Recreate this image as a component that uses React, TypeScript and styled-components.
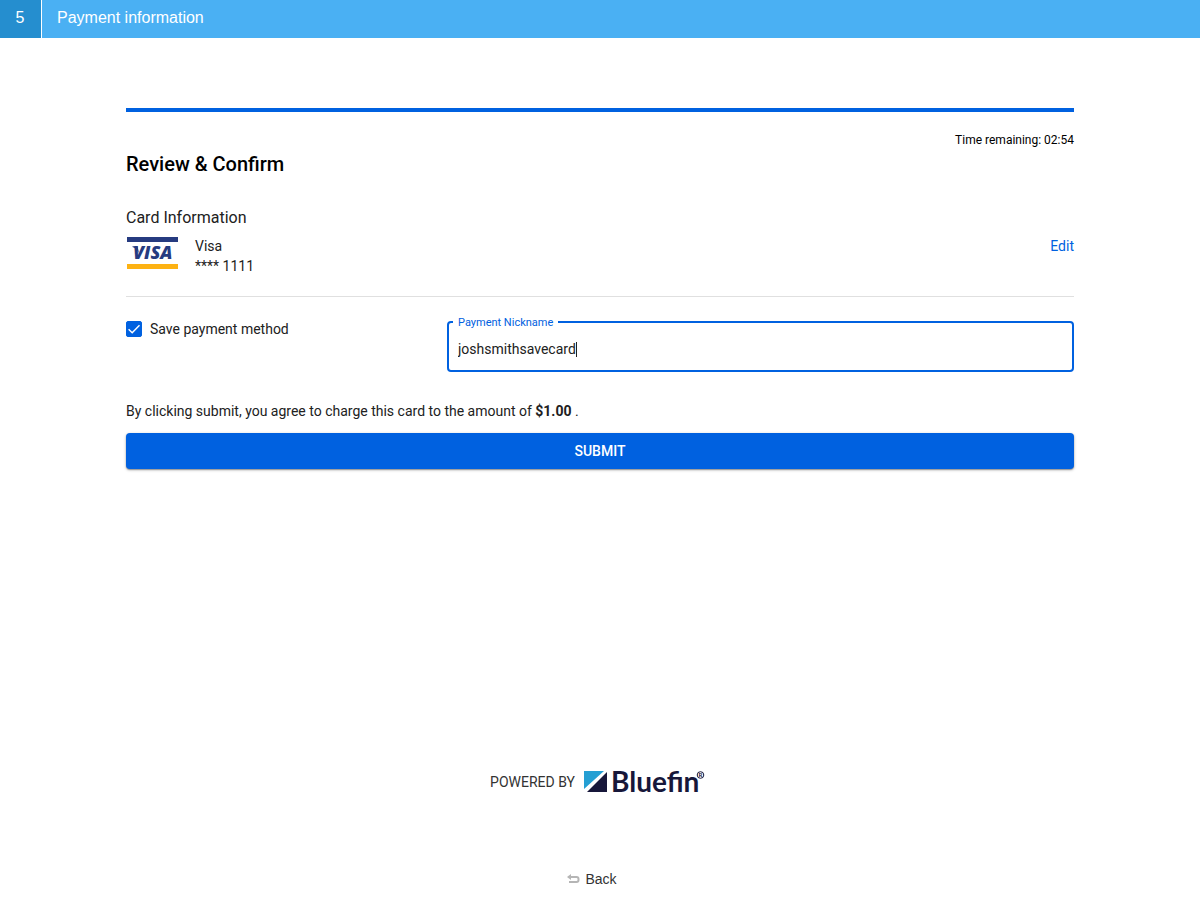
import React, { useState } from "react";
import styled, { createGlobalStyle } from "styled-components";

const BLUE = "#0061e0";

const GlobalStyle = createGlobalStyle`
  *, *::before, *::after { box-sizing: border-box; }
  body {
    margin: 0;
    background: #fff;
    color: #212121;
    font-family: Roboto, "Liberation Sans", sans-serif;
    font-size: 14px;
    line-height: 20px;
  }
`;

const Page = styled.div`
  margin-right: 4px;
`;

const StepHeader = styled.header`
  display: flex;
  height: 38px;
  background: #4ab0f3;
  color: #fff;
  font-family: "Liberation Sans", Arial, sans-serif;
  font-size: 16px;
  line-height: 36px;
`;

const StepNumber = styled.span`
  width: 42px;
  padding-right: 1px;
  text-align: center;
  background: #258ecf;
  border-right: 1px solid #fff;
`;

const StepTitle = styled.h1`
  margin: 0;
  padding-left: 15px;
  font-size: inherit;
  font-weight: 400;
`;

const Content = styled.main`
  margin: 70px 126px 0;
  border-top: 4px solid ${BLUE};
  padding-top: 18px;
`;

const Timer = styled.p`
  margin: 0;
  text-align: right;
  font-size: 12px;
  color: #000;
`;

const Heading = styled.h2`
  margin: 0;
  font-size: 20px;
  font-weight: 500;
  line-height: 28px;
  color: #000;
`;

const Subheading = styled.h3`
  margin: 28px 0 0;
  font-size: 16px;
  font-weight: 400;
  line-height: 24px;
`;

const CardRow = styled.section`
  display: flex;
  align-items: flex-start;
  padding: 6px 0 20px;
  border-bottom: 1px solid #e0e0e0;
`;

const CardDetails = styled.div`
  flex: 1;
  padding-left: 16px;
`;

const EditLink = styled.a`
  color: ${BLUE};
  text-decoration: none;
`;

const SaveRow = styled.div`
  display: grid;
  grid-template-columns: 321px 1fr;
  align-items: start;
  padding-top: 18px;
`;

const CheckLabel = styled.label`
  display: flex;
  align-items: center;
  gap: 8px;
  padding-top: 4px;
`;

const CheckBox = styled.span`
  display: grid;
  width: 16px;
  height: 16px;

  > * {
    grid-area: 1 / 1;
  }
`;

const CheckInput = styled.input`
  appearance: none;
  margin: 0;
  width: 16px;
  height: 16px;
  border: 1px solid ${BLUE};
  border-radius: 2px;

  &:checked {
    background: ${BLUE};
  }
`;

const CheckMark = styled.svg`
  z-index: 1;
  pointer-events: none;
`;

const Field = styled.fieldset`
  margin: 0;
  min-width: 0;
  height: 57px;
  padding: 0 9px;
  border: 2px solid ${BLUE};
  border-radius: 4px;
`;

const FieldLegend = styled.legend`
  height: 14px;
  margin-left: -5px;
  padding: 0 5px;
  font-size: 11px;
  line-height: 16px;
  color: ${BLUE};
`;

const InputLine = styled.div`
  display: flex;
  align-items: center;
  height: 40px;
`;

const TextInput = styled.input`
  field-sizing: content;
  min-width: 1px;
  padding: 0;
  border: 0;
  outline: 0;
  background: none;
  color: inherit;
  font: inherit;
  caret-color: transparent;
`;

const Caret = styled.span`
  width: 1px;
  height: 15px;
  background: #212121;
`;

const Agreement = styled.p`
  margin: 29px 0 12px;
`;

const SubmitButton = styled.button`
  display: block;
  width: 100%;
  height: 36px;
  padding: 0;
  border: 0;
  border-radius: 4px;
  background: ${BLUE};
  color: #fff;
  font: inherit;
  font-weight: 500;
  text-transform: uppercase;
  cursor: pointer;
  box-shadow: 0 1px 3px rgba(0, 0, 0, 0.3), 0 1px 1px rgba(0, 0, 0, 0.25);
`;

const Powered = styled.footer`
  display: flex;
  justify-content: center;
  align-items: center;
  gap: 9px;
  height: 40px;
  margin: 293px 0 67px;
  padding-right: 4px;
  color: #333;
`;

const BackRow = styled.nav`
  display: flex;
  justify-content: center;
  padding-right: 16px;
`;

const BackButton = styled.button`
  display: flex;
  align-items: center;
  gap: 5px;
  padding: 0;
  border: 0;
  background: none;
  color: #333;
  font: 14px/20px "Liberation Sans", Arial, sans-serif;
  cursor: pointer;
`;

function VisaLogo() {
  return (
    <svg width="53" height="34" viewBox="0 0 53 34" role="img" aria-label="Visa card">
      <rect x="1" y="1" width="51" height="5" fill="#263b80" />
      <rect x="1" y="28" width="51" height="5" fill="#fdb213" />
      <path d="M6.500 10.200h5l1.500 7c-1.200-3-3.400-5.200-6.500-6.300z" fill="#263b80" />
      <text x="7" y="23" fill="#263b80" fontFamily="Open Sans, sans-serif" fontSize="18" fontWeight="800" fontStyle="italic">
        VISA
      </text>
    </svg>
  );
}

function BluefinLogo() {
  return (
    <svg width="122" height="40" viewBox="0 -6 122 40" role="img" aria-label="Bluefin">
      <path d="M0 3h20L0 21z" fill="#259fd3" />
      <path d="M23 4v20H3z" fill="#17173a" />
      <text x="27" y="24" fill="#17173a" fontFamily="Lato, sans-serif" fontSize="28" fontWeight="700">
        Bluefin
      </text>
      <circle cx="116.500" cy="7" r="3.300" fill="none" stroke="#17173a" />
      <text x="116.500" y="9" textAnchor="middle" fill="#17173a" fontFamily="Lato, sans-serif" fontSize="6" fontWeight="700">
        R
      </text>
    </svg>
  );
}

export default function App() {
  const [saved, setSaved] = useState(true);
  const [nickname, setNickname] = useState("joshsmithsavecard");

  return (
    <Page>
      <GlobalStyle />
      <StepHeader>
        <StepNumber>5</StepNumber>
        <StepTitle>Payment information</StepTitle>
      </StepHeader>

      <Content>
        <Timer>Time remaining: 02:54</Timer>
        <Heading>Review &amp; Confirm</Heading>
        <Subheading>Card Information</Subheading>
        <CardRow>
          <VisaLogo />
          <CardDetails>
            <div>Visa</div>
            <div>**** 1111</div>
          </CardDetails>
          <EditLink href="#edit">Edit</EditLink>
        </CardRow>

        <SaveRow>
          <CheckLabel>
            <CheckBox>
              <CheckInput type="checkbox" checked={saved} onChange={(e) => setSaved(e.target.checked)} />
              {saved && (
                <CheckMark width="16" height="16" viewBox="0 0 16 16" fill="none" stroke="#fff" strokeWidth="1.400">
                  <path d="M2.600 8.300l3.600 3.500 7.300-7.600" />
                </CheckMark>
              )}
            </CheckBox>
            Save payment method
          </CheckLabel>
          <Field>
            <FieldLegend>
              <label htmlFor="nickname">Payment Nickname</label>
            </FieldLegend>
            <InputLine>
              <TextInput id="nickname" type="text" value={nickname} onChange={(e) => setNickname(e.target.value)} />
              <Caret />
            </InputLine>
          </Field>
        </SaveRow>

        <Agreement>
          By clicking submit, you agree to charge this card to the amount of <b>$1.00</b> .
        </Agreement>
        <SubmitButton type="submit">Submit</SubmitButton>
      </Content>

      <Powered>
        POWERED BY
        <BluefinLogo />
      </Powered>

      <BackRow>
        <BackButton type="button">
          <svg width="13" height="12" viewBox="0 0 13 12" fill="none" stroke="#b5b5b5" strokeWidth="2">
            <path d="M3 4h6.500a2 2 0 0 1 2 2v1a2 2 0 0 1-2 2H2" />
            <path d="M4 1v6L0 4z" fill="#b5b5b5" stroke="none" />
          </svg>
          Back
        </BackButton>
      </BackRow>
    </Page>
  );
}
